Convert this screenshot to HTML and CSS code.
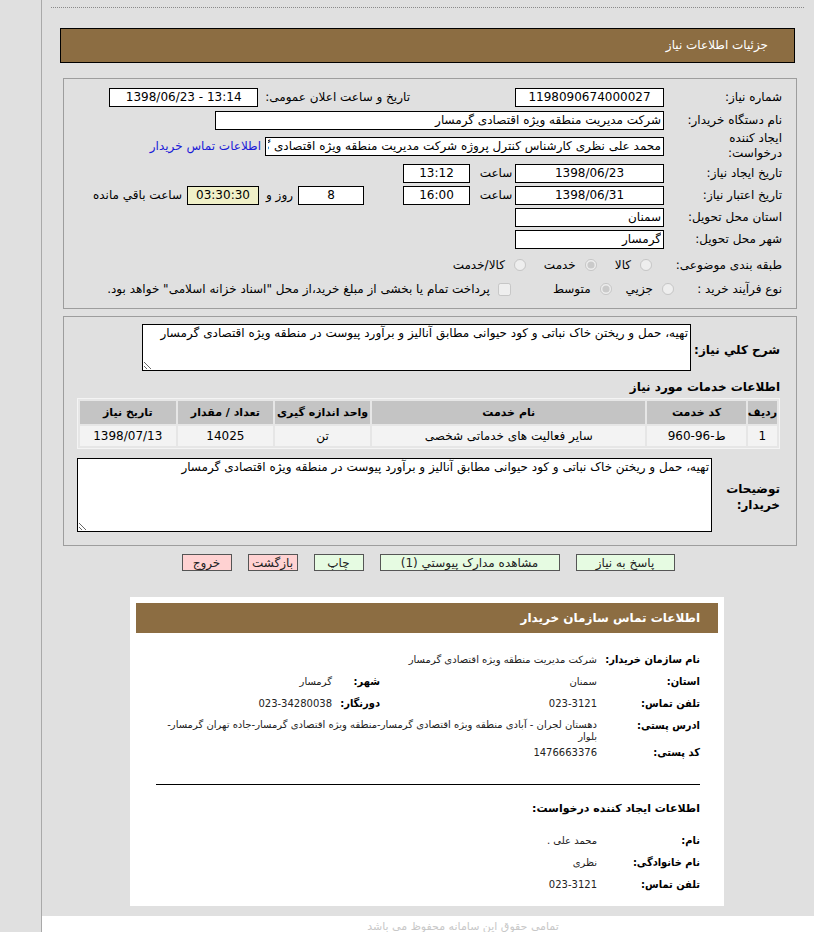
FILE: index.html
```html
<!DOCTYPE html>
<html lang="fa" dir="rtl">
<head>
    <meta charset="utf-8">
    <title>جزئیات اطلاعات نیاز</title>
    <link rel="stylesheet" href="styles.css">
</head>
<body>
<div class="shell">
    <div class="page">
        <div class="top-line"></div>
        <div class="title-bar">جزئیات اطلاعات نیاز</div>

        <!-- مشخصات نیاز -->
        <div class="panel form-panel">
            <div class="row">
                <span class="lbl">شماره نیاز:</span>
                <input class="fld w149 center" readonly value="1198090674000027">
                <span class="sub-lbl announce">تاریخ و ساعت اعلان عمومی:</span>
                <input class="fld w149 center" readonly value="13:14 - 1398/06/23">
            </div>
            <div class="row gap1">
                <span class="lbl">نام دستگاه خریدار:</span>
                <input class="fld w449" readonly value="شرکت مدیریت منطقه ویژه اقتصادی گرمسار">
            </div>
            <div class="row tall">
                <span class="lbl">ایجاد کننده<br>درخواست:</span>
                <input class="fld w399" readonly value="محمد علی نظری کارشناس کنترل پروژه شرکت مدیریت منطقه ویژه اقتصادی گرمسار">
                <a class="buyer-link" href="#contact">اطلاعات تماس خریدار</a>
            </div>
            <div class="row gap1">
                <span class="lbl">تاریخ ایجاد نیاز:</span>
                <input class="fld w149 center" readonly value="1398/06/23">
                <span class="sub-lbl hour">ساعت</span>
                <input class="fld w67 center" readonly value="13:12">
            </div>
            <div class="row">
                <span class="lbl">تاریخ اعتبار نیاز:</span>
                <input class="fld w149 center" readonly value="1398/06/31">
                <span class="sub-lbl hour">ساعت</span>
                <input class="fld w67 center" readonly value="16:00">
                <input class="fld w66 center days" readonly value="8">
                <span class="sub-lbl and-days">روز و</span>
                <input class="fld w72 center remain" readonly value="03:30:30">
                <span class="sub-lbl left-text">ساعت باقي مانده</span>
            </div>
            <div class="row">
                <span class="lbl">استان محل تحویل:</span>
                <input class="fld w149" readonly value="سمنان">
            </div>
            <div class="row">
                <span class="lbl">شهر محل تحویل:</span>
                <input class="fld w149" readonly value="گرمسار">
            </div>
            <div class="row opts">
                <span class="lbl">طبقه بندی موضوعی:</span>
                <label class="opt first"><input type="radio" name="cat" disabled> کالا</label>
                <label class="opt"><input type="radio" name="cat" checked disabled> خدمت</label>
                <label class="opt"><input type="radio" name="cat" disabled> کالا/خدمت</label>
            </div>
            <div class="row opts2">
                <span class="lbl narrow">نوع فرآیند خرید :</span>
                <label class="opt"><input type="radio" name="kind" disabled> جزيي</label>
                <label class="opt"><input type="radio" name="kind" checked disabled> متوسط</label>
                <label class="opt check"><input type="checkbox" disabled> پرداخت تمام یا بخشی از مبلغ خرید،از محل "اسناد خزانه اسلامی" خواهد بود.</label>
            </div>
        </div>

        <!-- شرح و اقلام -->
        <div class="panel desc-panel">
            <div class="desc-row">
                <span class="bold-lbl desc-lbl">شرح کلي نیاز:</span>
                <textarea class="desc-box" readonly>تهیه، حمل و ریختن خاک نباتی و کود حیوانی مطابق آنالیز و برآورد پیوست در منطقه ویژه اقتصادی گرمسار</textarea>
            </div>
            <div class="section-title">اطلاعات خدمات مورد نیاز</div>
            <table class="items">
                <thead>
                    <tr>
                        <th class="c-no">ردیف</th>
                        <th class="c-code">کد خدمت</th>
                        <th class="c-name">نام خدمت</th>
                        <th class="c-unit">واحد اندازه گیری</th>
                        <th class="c-qty">تعداد / مقدار</th>
                        <th class="c-date">تاریخ نیاز</th>
                    </tr>
                </thead>
                <tbody>
                    <tr>
                        <td>1</td>
                        <td>ط-96-960</td>
                        <td>سایر فعالیت های خدماتی شخصی</td>
                        <td>تن</td>
                        <td>14025</td>
                        <td>1398/07/13</td>
                    </tr>
                </tbody>
            </table>
            <div class="desc-row notes-row">
                <span class="bold-lbl notes-lbl">توضیحات<br>خریدار:</span>
                <textarea class="notes-box" readonly>تهیه، حمل و ریختن خاک نباتی و کود حیوانی مطابق آنالیز و برآورد پیوست در منطقه ویژه اقتصادی گرمسار</textarea>
            </div>
        </div>

        <div class="actions">
            <button class="btn green w99">پاسخ به نیاز</button>
            <button class="btn green w180">مشاهده مدارک پیوستي (1)</button>
            <button class="btn green w50">چاپ</button>
            <button class="btn pink w50">بازگشت</button>
            <button class="btn pink w50">خروج</button>
        </div>

        <!-- اطلاعات تماس -->
        <div class="contact-card" id="contact">
            <div class="card-head">اطلاعات تماس سازمان خریدار</div>
            <div class="card-body">
                <div class="info-row">
                    <span class="i-lbl">نام سازمان خریدار:</span>
                    <span class="i-val span3">شرکت مدیریت منطقه ویژه اقتصادی گرمسار</span>
                </div>
                <div class="info-row">
                    <span class="i-lbl">استان:</span>
                    <span class="i-val">سمنان</span>
                    <span class="i-lbl">شهر:</span>
                    <span class="i-val">گرمسار</span>
                </div>
                <div class="info-row">
                    <span class="i-lbl">تلفن تماس:</span>
                    <span class="i-val">023-3121</span>
                    <span class="i-lbl">دورنگار:</span>
                    <span class="i-val">023-34280038</span>
                </div>
                <div class="info-row addr">
                    <span class="i-lbl">ادرس پستی:</span>
                    <span class="i-val span3">دهستان لجران - آبادی منطقه ویژه اقتصادی گرمسار-منطقه ویژه اقتصادی گرمسار-جاده تهران گرمسار-بلوار</span>
                </div>
                <div class="info-row">
                    <span class="i-lbl">کد پستی:</span>
                    <span class="i-val">1476663376</span>
                </div>

                <hr class="sep">

                <div class="card-sub">اطلاعات ایجاد کننده درخواست:</div>
                <div class="info-row">
                    <span class="i-lbl">نام:</span>
                    <span class="i-val">محمد علی .</span>
                </div>
                <div class="info-row">
                    <span class="i-lbl">نام خانوادگی:</span>
                    <span class="i-val">نظری</span>
                </div>
                <div class="info-row">
                    <span class="i-lbl">تلفن تماس:</span>
                    <span class="i-val">023-3121</span>
                </div>
            </div>
        </div>
    </div>
    <div class="footer">تمامی حقوق این سامانه محفوظ می باشد</div>
</div>
</body>
</html>
```

FILE: styles.css
```css
body {
    margin: 0;
    background: #e0e0e0;
    direction: rtl;
    font-family: "DejaVu Sans", sans-serif;
    font-size: 12px;
    color: #000;
}

.shell {
    margin-left: 41px;
    border-left: 1px solid #a9a9a9;
    min-height: 100vh;
}

.page {
    background: #e0e0e0;
    padding: 7px 0 10px;
}

.top-line {
    margin: 0 10px 0 9px;
    border-top: 1px dotted #8a8a8a;
}

.title-bar {
    margin: 20px 19px 0 18px;
    height: 33px;
    line-height: 33px;
    background: #8c6d42;
    border: 1px solid #000;
    color: #fff;
    padding-right: 26px;
}

.panel {
    margin: 0 17px 0 21px;
    border: 1px solid #9d9d9d;
}

/* فرم بالا */
.form-panel {
    margin-top: 15px;
    padding: 7px 14px 8px 0;
}

.row {
    display: flex;
    align-items: center;
    height: 22px;
    white-space: nowrap;
}

.row.gap1 {
    margin-top: 1px;
}

.row.tall {
    height: 30px;
}

.row.opts {
    margin-top: 4px;
}

.row.opts2 {
    margin-top: 2px;
}

.lbl {
    width: 118px;
    flex: none;
    line-height: 15px;
}

.lbl.narrow {
    width: 108px;
}

.fld {
    box-sizing: border-box;
    height: 19px;
    border: 1px solid #000;
    background: #fff;
    font: 12px "DejaVu Sans", sans-serif;
    padding: 0 2px;
    text-align: right;
    color: #000;
    margin: 0;
    flex: none;
}

.fld.center {
    text-align: center;
}

.w149 { width: 149px; }
.w449 { width: 449px; }
.w399 { width: 399px; }
.w67 { width: 67px; }
.w66 { width: 66px; }
.w72 { width: 72px; }

.fld.remain {
    background: #f0f0c8;
}

.fld.days {
    margin-right: 39px;
}

.sub-lbl.announce {
    margin: 0 105px 0 7px;
}

.sub-lbl.hour {
    width: 38px;
    text-align: center;
    margin-left: 7px;
}

.sub-lbl.and-days {
    margin: 0 5px 0 7px;
}

.sub-lbl.left-text {
    margin-right: 5px;
}

.buyer-link {
    margin-right: 4px;
    color: #1a1ad8;
    text-decoration: none;
}

.opt {
    display: flex;
    align-items: center;
    margin-left: 14px;
}

.opt input {
    margin: 0 0 0 9px;
    width: 12px;
    height: 12px;
}

.opts .opt {
    margin-left: 18px;
}

.opts .opt.first {
    margin-right: 12px;
}

.opt.check input {
    width: 13px;
    height: 13px;
    margin-left: 8px;
}

.opt.check {
    margin-right: 28px;
}

/* شرح و جدول */
.desc-panel {
    margin-top: 7px;
    padding: 7px 16px 13px 13px;
}

.desc-row {
    display: flex;
    align-items: center;
}

.bold-lbl {
    font-weight: bold;
    font-size: 12px;
}

.desc-lbl {
    width: 89px;
    flex: none;
    margin-top: 4px;
    white-space: nowrap;
}

.desc-box {
    box-sizing: border-box;
    width: 549px;
    height: 47px;
    border: 1px solid #000;
    background: #fff;
    font: 12px "DejaVu Sans", sans-serif;
    padding: 1px 2px;
    resize: both;
    margin: 0;
}

.section-title {
    font-weight: bold;
    font-size: 12px;
    margin-top: 8px;
    line-height: 16px;
}

.items {
    width: 703px;
    margin-top: 3px;
    border: 1px solid #f4f4f4;
    border-spacing: 2px;
    background: #e6e6e6;
}

.items th {
    background: #c4c4c4;
    height: 23px;
    font-size: 11px;
    padding: 0;
    white-space: nowrap;
}

.items td {
    background: #f3f3f3;
    height: 20px;
    text-align: center;
    padding: 0;
}

.c-no { width: 26px; }
.c-code { width: 99px; }
.c-name { width: 277px; }
.c-unit { width: 95px; }
.c-qty { width: 96px; }
.c-date { width: 96px; }

.notes-row {
    margin-top: 9px;
}

.notes-lbl {
    width: 68px;
    flex: none;
    line-height: 16px;
    margin-top: 4px;
}

.notes-box {
    box-sizing: border-box;
    width: 636px;
    height: 74px;
    border: 1px solid #000;
    background: #fff;
    font: 12px "DejaVu Sans", sans-serif;
    padding: 1px 2px;
    margin: 0;
}

/* دکمه ها */
.actions {
    display: flex;
    justify-content: center;
    gap: 16px;
    margin-top: 8px;
}

.btn {
    box-sizing: border-box;
    height: 17px;
    padding: 0;
    border: 1px solid #555;
    font: 12px "DejaVu Sans", sans-serif;
    line-height: 14px;
    color: #222;
}

.btn.green { background: #e6fbe2; }
.btn.pink { background: #ffd2d2; }
.w99 { width: 99px; }
.w180 { width: 180px; }
.w50 { width: 50px; }

/* کارت تماس */
.contact-card {
    width: 594px;
    box-sizing: border-box;
    margin: 26px auto 0;
    background: #fff;
    padding: 6px 6px 11px;
    position: relative;
    left: -1px;
}

.card-head {
    height: 30px;
    line-height: 30px;
    background: #8c6d42;
    color: #fff;
    font-weight: bold;
    font-size: 12px;
    padding-right: 18px;
}

.card-body {
    padding: 15px 18px 0 20px;
}

.info-row {
    display: grid;
    grid-template-columns: 103px 217px 48px 1fr;
    align-items: center;
    height: 22px;
}

.info-row.addr {
    align-items: start;
    height: 27px;
    padding-top: 5px;
    box-sizing: border-box;
}

.i-lbl {
    font-family: "DejaVu Sans Condensed", "DejaVu Sans", sans-serif;
    font-weight: bold;
    font-size: 11px;
    white-space: nowrap;
}

.i-val {
    font-size: 10px;
    color: #222;
}

.addr .i-val {
    line-height: 12px;
}

.span3 {
    grid-column: 2 / 5;
}

.sep {
    border: none;
    border-top: 1px solid #000;
    margin: 21px 0 0;
}

.card-sub {
    font-weight: bold;
    font-size: 11px;
    margin: 17px 0 13px;
    line-height: 14px;
}

.footer {
    background: #fff;
    min-height: 40px;
    text-align: center;
    color: #c8c8c8;
    font-size: 11px;
    padding-top: 4px;
    padding-left: 70px;
}
```
